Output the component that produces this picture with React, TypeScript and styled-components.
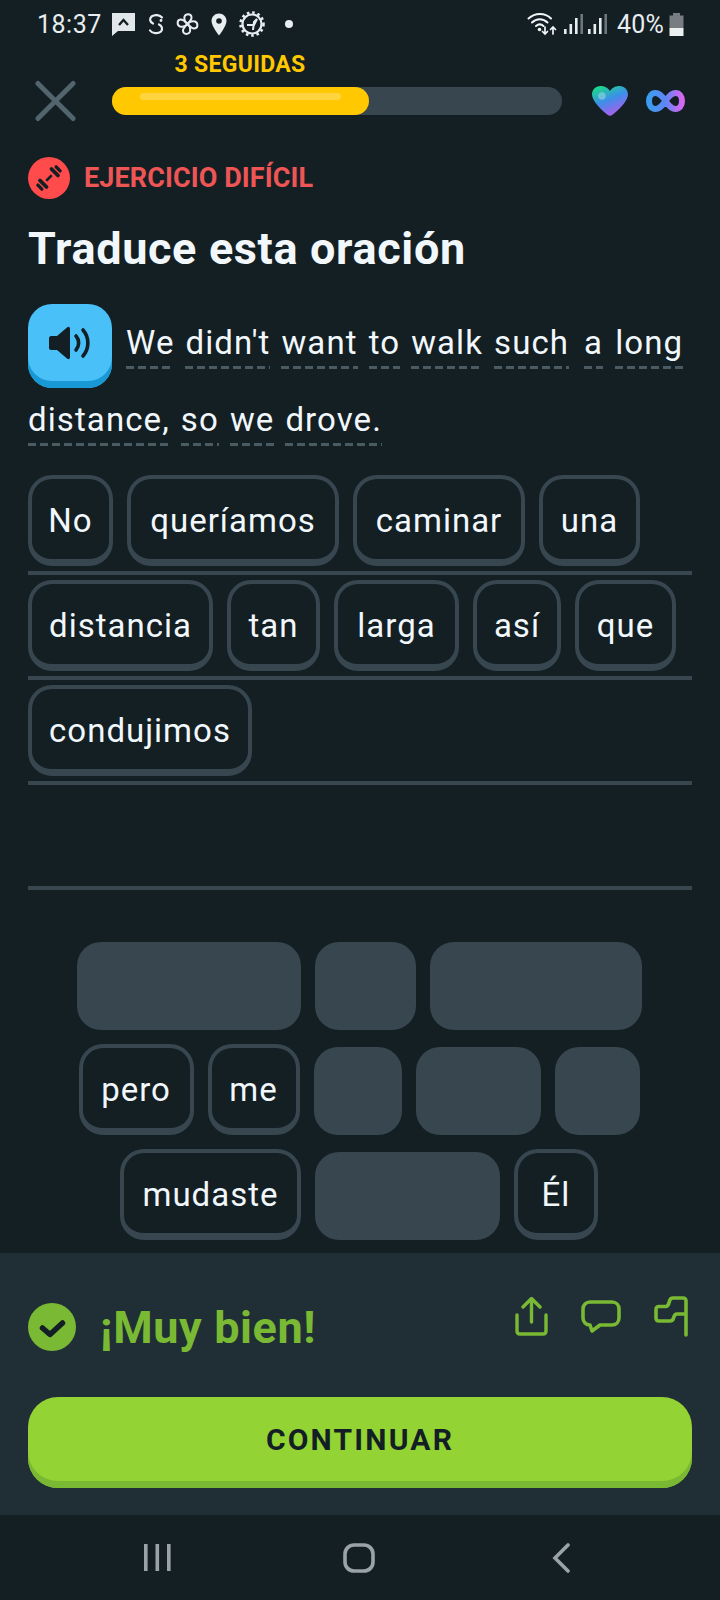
import React from "react";
import styled, { createGlobalStyle } from "styled-components";

const Global = createGlobalStyle`
  html, body { margin: 0; padding: 0; background: #141f24; }
  * { box-sizing: border-box; }
`;

const FONT = `Roboto, "Noto Sans", "Liberation Sans", sans-serif`;

const Page = styled.div`
  width: 720px;
  height: 1600px;
  background: #141f24;
  display: flex;
  flex-direction: column;
  font-family: ${FONT};
  color: #f1f7fb;
  overflow: hidden;
`;

const StatusBar = styled.div`
  height: 48px;
  flex: none;
  display: flex;
  align-items: center;
  padding: 0 36px 0 37px;
  color: #e8edf0;
`;
const StatusTime = styled.span`
  font-size: 25px;
  width: 74px;
  letter-spacing: 0.5px;
`;
const StatusLeft = styled.div`
  display: flex;
  align-items: center;
  gap: 12px;
  flex: 1;
`;
const StatusDot = styled.span`
  width: 8px;
  height: 8px;
  margin-left: 8px;
  border-radius: 50%;
  background: #e8edf0;
`;
const StatusRight = styled.div`
  display: flex;
  align-items: center;
  gap: 5px;
`;
const StatusPct = styled.span`
  font-size: 25px;
  margin-left: 5px;
  letter-spacing: 0.2px;
`;

const StreakLabel = styled.div`
  height: 32px;
  flex: none;
  width: 256px;
  margin-left: 112px;
  text-align: center;
  line-height: 34px;
  font-size: 23px;
  font-weight: 700;
  color: #ffc800;
  letter-spacing: 0.3px;
`;
const HeaderRow = styled.div`
  height: 42px;
  flex: none;
  display: flex;
  align-items: center;
  padding: 0 35px 0 35px;
`;
const Track = styled.div`
  width: 450px;
  height: 28px;
  margin-left: 36px;
  border-radius: 14px;
  background: #37464f;
  flex: none;
`;
const Fill = styled.div<{ $pct: number }>`
  width: ${(p) => p.$pct}%;
  height: 100%;
  border-radius: 14px;
  background: #ffc800;
  padding: 6px 28px 0 28px;
`;
const Shine = styled.div`
  height: 7px;
  border-radius: 4px;
  background: #ffd53f;
`;
const HeaderIcons = styled.div`
  display: flex;
  align-items: center;
  margin-left: 30px;
  gap: 18px;
`;

const Main = styled.div`
  padding: 0 28px;
  flex: none;
`;
const HardRow = styled.div`
  margin-top: 35px;
  height: 42px;
  display: flex;
  align-items: center;
  gap: 14px;
`;
const HardLabel = styled.span`
  font-size: 27px;
  font-weight: 700;
  color: #ee5555;
  letter-spacing: 0.1px;
`;
const Title = styled.h1`
  margin: 20px 0 0;
  height: 59px;
  line-height: 60px;
  font-size: 45px;
  font-weight: 700;
  color: #f1f7fb;
  letter-spacing: 0.65px;
`;
const PromptFirst = styled.div`
  margin-top: 26px;
  height: 84px;
  display: flex;
  gap: 14px;
`;
const SpeakerButton = styled.div`
  width: 84px;
  height: 84px;
  flex: none;
  border-radius: 24px;
  background: #49c0f8;
  box-shadow: inset 0 -7px 0 #1899d6;
  display: flex;
  align-items: center;
  justify-content: center;
  padding-bottom: 7px;
`;
const Words = styled.div<{ $top: number }>`
  display: flex;
  gap: 11px;
  padding-top: ${(p) => p.$top}px;
  height: 64px;
`;
const Word = styled.span<{ $lead?: number }>`
  font-size: 33px;
  line-height: 44px;
  height: 48px;
  letter-spacing: 1.1px;
  margin-left: ${(p) => p.$lead ?? 0}px;
  color: #f1f7fb;
  background-image: repeating-linear-gradient(90deg, #4b5b63 0 8px, transparent 8px 12px);
  background-size: 100% 3px;
  background-repeat: no-repeat;
  background-position: 0 100%;
`;

const AnswerRow = styled.div`
  height: 105px;
  padding-top: 5px;
  border-bottom: 4px solid #37464f;
  display: flex;
  gap: 14px;
`;
const Chip = styled.div<{ $w: number }>`
  width: ${(p) => p.$w}px;
  height: 91px;
  flex: none;
  border: 4px solid #37464f;
  border-bottom-width: 7px;
  border-radius: 24px;
  background: #141f24;
  display: flex;
  align-items: center;
  justify-content: center;
  font-size: 33px;
  letter-spacing: 1px;
  color: #f1f7fb;
  padding-top: 2px;
`;
const Blank = styled.div<{ $w: number }>`
  width: ${(p) => p.$w}px;
  height: 88px;
  margin-top: 3px;
  flex: none;
  border-radius: 24px;
  background: #37464f;
`;
const AnswerArea = styled.div`
  margin-top: 18px;
`;
const Bank = styled.div`
  margin-top: 49px;
  margin-left: -2px;
  display: flex;
  flex-direction: column;
  gap: 14px;
  flex: none;
`;
const BankRow = styled.div`
  display: flex;
  justify-content: center;
  gap: 14px;
`;
const Spacer = styled.div`
  flex: 1;
`;

const Footer = styled.div`
  height: 262px;
  flex: none;
  background: #202f36;
  padding: 0 28px;
  display: flex;
  flex-direction: column;
`;
const ResultRow = styled.div`
  height: 144px;
  flex: none;
  display: flex;
  align-items: flex-start;
`;
const ResultLeft = styled.div`
  display: flex;
  align-items: center;
  gap: 24px;
  margin-top: 48px;
  flex: 1;
`;
const ResultText = styled.span`
  font-size: 45px;
  font-weight: 700;
  color: #79b933;
  line-height: 48px;
  letter-spacing: 0.6px;
  padding-top: 3px;
`;
const ResultIcons = styled.div`
  display: flex;
  align-items: center;
  gap: 33px;
  margin-top: 43px;
  margin-right: 3px;
`;
const ContinueButton = styled.div`
  height: 91px;
  border-radius: 30px;
  background: #93d333;
  box-shadow: inset 0 -7px 0 #79b933;
  display: flex;
  align-items: center;
  justify-content: center;
  padding-bottom: 7px;
  font-size: 30px;
  font-weight: 700;
  letter-spacing: 2.2px;
  color: #131f24;
`;

const NavBar = styled.div`
  height: 85px;
  flex: none;
  background: #141f24;
  display: flex;
  align-items: center;
  justify-content: center;
  padding-right: 3px;
`;
const NavSlot = styled.div`
  width: 202px;
  display: flex;
  justify-content: center;
`;

const Bell = () => (
  <svg width="25" height="24" viewBox="0 0 25 24">
    <path d="M1 1h23v18H7l-6 5z" fill="#e2e7ea" />
    <path d="M8 13l4.500-5 4.500 5" fill="none" stroke="#141f24" strokeWidth="2.400" />
  </svg>
);
const SyncS = () => (
  <svg width="16" height="22" viewBox="0 0 16 22" fill="none" stroke="#e8edf0" strokeWidth="2.200" strokeLinecap="round">
    <path d="M14 4.500C12 2 7 1 3.500 3.500 1 6 2 9 5 10.500" />
    <path d="M2 17.500C4 20.500 10 21 13 18.500c2-2.500 1-5.500-2-7" />
    <circle cx="13" cy="7.500" r="1.400" fill="#e8edf0" stroke="none" />
  </svg>
);
const Fan = () => (
  <svg width="23" height="24" viewBox="0 0 23 24" fill="none" stroke="#e8edf0" strokeWidth="2">
    <path d="M11.500 12C9 10 8 7 8.500 4.500 9.500 1.500 15 1 15.500 5c.3 3-2 5-4 7z" />
    <path d="M11.500 12c2-2.500 5-3 7.500-2.500 3 1 3.500 6.500-.5 7-3 .3-5-2.500-7-4.500z" />
    <path d="M11.500 12c2.500 2 3 5 2.500 7.500-1 3-6.500 3.500-7-.5-.3-3 2.500-5 4.500-7z" />
    <path d="M11.500 12C9.500 14.500 6.500 15 4 14.500 1 13.500.5 8 4.500 7.500c3-.3 5 2.500 7 4.500z" />
  </svg>
);
const Pin = () => (
  <svg width="16" height="23" viewBox="0 0 16 23">
    <path d="M8 .5C3.800.5.500 3.800.500 8c0 5 7.500 14.500 7.500 14.500S15.500 13 15.500 8C15.500 3.800 12.200.5 8 .5z" fill="#e8edf0" />
    <circle cx="8" cy="8" r="2.800" fill="#141f24" />
  </svg>
);
const Gear = () => (
  <svg width="26" height="26" viewBox="0 0 26 26" fill="none" stroke="#e8edf0">
    <circle cx="13" cy="13" r="9.500" strokeWidth="2.200" />
    <circle cx="13" cy="13" r="11.500" strokeWidth="2.600" strokeDasharray="2.600 2.800" />
    <path d="M8 14h7l3-6-3 3-1 8" strokeWidth="2" />
  </svg>
);
const Wifi = () => (
  <svg width="34" height="24" viewBox="0 0 30 24" fill="none" stroke="#f1f5f6" strokeLinecap="round">
    <path d="M1.500 6.500C8 .5 18 .5 24 6.500" strokeWidth="2" />
    <path d="M5 10.500C9.500 6 16 6 20.500 10.500" strokeWidth="2" />
    <path d="M9 14c2.500-2.200 5-2.200 7.500 0" strokeWidth="2" />
    <circle cx="12.500" cy="17.500" r="1.800" fill="#f1f5f6" stroke="none" />
    <path d="M18 15v7m-2.500-2.500L18 22l2.500-2.500M26 22v-7m-2.500 2.500L26 15l2.500 2.500" strokeWidth="1.700" />
  </svg>
);
const Signal = () => (
  <svg width="19" height="22" viewBox="0 0 19 22" fill="#e8edf0">
    <rect x="0" y="16" width="2.600" height="5" />
    <rect x="5.500" y="11" width="2.600" height="10" />
    <rect x="11" y="5" width="2.600" height="16" />
    <rect x="16.400" y="1" width="2.600" height="20" fill="#6d767b" />
  </svg>
);
const Battery = () => (
  <svg width="15" height="23" viewBox="0 0 15 23">
    <rect x="4" y="0" width="7" height="3" fill="#777d80" />
    <rect x="0.500" y="2.500" width="14" height="13" fill="#777d80" />
    <rect x="0.500" y="15" width="14" height="8" fill="#eceff0" />
  </svg>
);
const CloseX = () => (
  <svg width="42" height="42" viewBox="0 0 42 42" fill="none" stroke="#52656d" strokeWidth="5" strokeLinecap="round">
    <path d="M3 3l36 36M39 3L3 39" />
  </svg>
);
const Heart = () => (
  <svg width="36" height="30" viewBox="0 0 36 30">
    <defs>
      <linearGradient id="hg" x1="0.100" y1="0" x2="0.600" y2="1">
        <stop offset="0" stopColor="#17e37f" />
        <stop offset="0.500" stopColor="#3c8fe8" />
        <stop offset="1" stopColor="#b05cf0" />
      </linearGradient>
    </defs>
    <path d="M18 5C15.500 1 11.500 0 8.500 0 3.500 0 0 3.800 0 8.500 0 15 10 24.500 15.500 28.800c1.500 1.200 3.500 1.200 5 0C26 24.500 36 15 36 8.500 36 3.800 32.500 0 27.500 0 24.500 0 20.500 1 18 5z" fill="url(#hg)" />
    <circle cx="10" cy="10" r="3.800" fill="#ffffff" opacity="0.300" />
  </svg>
);
const Infinity8 = () => (
  <svg width="39" height="22" viewBox="0 0 39 22" fill="none">
    <defs>
      <linearGradient id="ig" x1="0" y1="0" x2="1" y2="0">
        <stop offset="0" stopColor="#3b9cf0" />
        <stop offset="0.500" stopColor="#5f86f5" />
        <stop offset="1" stopColor="#d667f2" />
      </linearGradient>
    </defs>
    <path
      d="M19.500 11C16.500 6.500 13.500 3 9.500 3 5.500 3 3 6.500 3 11s2.500 8 6.500 8c4 0 7-3.500 10-8zm0 0c3-4.500 6-8 10-8 4 0 6.500 3.500 6.500 8s-2.500 8-6.500 8c-4 0-7-3.500-10-8z"
      stroke="url(#ig)"
      strokeWidth="6"
    />
  </svg>
);
const Dumbbell = () => (
  <svg width="42" height="42" viewBox="0 0 42 42">
    <circle cx="21" cy="21" r="21" fill="#ff4b4b" />
    <g transform="rotate(-45 21 21)" fill="#141f24">
      <rect x="17" y="19.600" width="8" height="2.800" rx="1" />
      <rect x="11" y="14.500" width="3.800" height="13" rx="1.900" />
      <rect x="6.400" y="16.500" width="3.400" height="9" rx="1.700" />
      <rect x="27.200" y="14.500" width="3.800" height="13" rx="1.900" />
      <rect x="32.200" y="16.500" width="3.400" height="9" rx="1.700" />
    </g>
  </svg>
);
const Speaker = () => (
  <svg width="42" height="34" viewBox="0 0 42 34">
    <path d="M2 10h6L18 1.500c1.500-1.300 3-.5 3 1.500v28c0 2-1.500 2.800-3 1.500L8 24H2c-1 0-2-1-2-2V12c0-1 1-2 2-2z" fill="#131f24" />
    <path d="M27 10c3.500 4 3.500 10 0 14M34 4c6.500 7.500 6.500 18.500 0 26" fill="none" stroke="#131f24" strokeWidth="3.600" strokeLinecap="round" />
  </svg>
);
const CheckCircle = () => (
  <svg width="48" height="48" viewBox="0 0 48 48">
    <circle cx="24" cy="24" r="24" fill="#79b933" />
    <path d="M14.500 25l7.500 6.500 12.500-11.500" fill="none" stroke="#131f24" strokeWidth="5.500" strokeLinecap="round" strokeLinejoin="round" />
  </svg>
);
const ShareIcon = () => (
  <svg width="33" height="39" viewBox="0 0 33 39" fill="none" stroke="#79b933" strokeWidth="3.400" strokeLinecap="round" strokeLinejoin="round">
    <path d="M2 18v16c0 2 1 3 3 3h23c2 0 3-1 3-3V18" />
    <path d="M16.500 25V2M8 10l8.500-8.500L25 10" />
  </svg>
);
const ChatIcon = () => (
  <svg width="40" height="34" viewBox="0 0 40 34" fill="none" stroke="#79b933" strokeWidth="3.600" strokeLinecap="round" strokeLinejoin="round">
    <path d="M9 2h22c4 0 7 3 7 7v9c0 4-3 7-7 7H19l-8 6-2-6c-4 0-7-3-7-7V9c0-4 3-7 7-7z" />
  </svg>
);
const FlagIcon = () => (
  <svg width="35" height="41" viewBox="0 0 35 41" fill="none" stroke="#79b933" strokeWidth="3.600" strokeLinecap="round" strokeLinejoin="round">
    <path d="M32 39V5c0-2-1-3-3-3H19c-2 0-3 1-3.500 3-.5 2-1 5-3.500 5.500H5c-2 0-3 1-3 3v8.500c0 2 1 3 3 3h11c2 0 3-1 3.500-3 .5-2 1.500-4 3.500-4h9" />
  </svg>
);
const NavRecent = () => (
  <svg width="28" height="29" viewBox="0 0 28 29" fill="#9aa3a8">
    <rect x="1" y="1" width="3.600" height="27" />
    <rect x="12.500" y="1" width="3.600" height="27" />
    <rect x="24" y="1" width="3.600" height="27" />
  </svg>
);
const NavHome = () => (
  <svg width="32" height="30" viewBox="0 0 32 30" fill="none" stroke="#9aa3a8" strokeWidth="3.600">
    <rect x="2" y="2" width="28" height="26" rx="9" />
  </svg>
);
const NavBack = () => (
  <svg width="18" height="30" viewBox="0 0 18 30" fill="none" stroke="#9aa3a8" strokeWidth="3.600" strokeLinecap="round">
    <path d="M16 2L3 15l13 13" />
  </svg>
);

const answers: [string, number][][] = [
  [["No", 85], ["queríamos", 212], ["caminar", 172], ["una", 101]],
  [["distancia", 185], ["tan", 93], ["larga", 125], ["así", 88], ["que", 101]],
  [["condujimos", 224]],
  [],
];

const firstLine: [string, number][] = [
  ["We", 0], ["didn't", 0], ["want", 0], ["to", 0], ["walk", 0], ["such", 0], ["a", 4], ["long", 1],
];

export default function App() {
  return (
    <Page>
      <Global />
      <StatusBar>
        <StatusTime>18:37</StatusTime>
        <StatusLeft>
          <Bell />
          <SyncS />
          <Fan />
          <Pin />
          <Gear />
          <StatusDot />
        </StatusLeft>
        <StatusRight>
          <Wifi />
          <Signal />
          <Signal />
          <StatusPct>40%</StatusPct>
          <Battery />
        </StatusRight>
      </StatusBar>
      <StreakLabel>3 SEGUIDAS</StreakLabel>
      <HeaderRow>
        <CloseX />
        <Track>
          <Fill $pct={57}>
            <Shine />
          </Fill>
        </Track>
        <HeaderIcons>
          <Heart />
          <Infinity8 />
        </HeaderIcons>
      </HeaderRow>
      <Main>
        <HardRow>
          <Dumbbell />
          <HardLabel>EJERCICIO DIFÍCIL</HardLabel>
        </HardRow>
        <Title>Traduce esta oración</Title>
        <PromptFirst>
          <SpeakerButton>
            <Speaker />
          </SpeakerButton>
          <Words $top={17}>
            {firstLine.map(([w, lead]) => (
              <Word key={w} $lead={lead}>{w}</Word>
            ))}
          </Words>
        </PromptFirst>
        <Words $top={10}>
          {["distance,", "so", "we", "drove."].map((w) => (
            <Word key={w}>{w}</Word>
          ))}
        </Words>
        <AnswerArea>
          {answers.map((row, i) => (
            <AnswerRow key={i}>
              {row.map(([t, w]) => (
                <Chip key={t} $w={w}>{t}</Chip>
              ))}
            </AnswerRow>
          ))}
        </AnswerArea>
      </Main>
      <Bank>
        <BankRow>
          <Blank $w={224} />
          <Blank $w={101} />
          <Blank $w={212} />
        </BankRow>
        <BankRow>
          <Chip $w={115}>pero</Chip>
          <Chip $w={92}>me</Chip>
          <Blank $w={88} />
          <Blank $w={125} />
          <Blank $w={85} />
        </BankRow>
        <BankRow>
          <Chip $w={181}>mudaste</Chip>
          <Blank $w={185} />
          <Chip $w={84}>Él</Chip>
        </BankRow>
      </Bank>
      <Spacer />
      <Footer>
        <ResultRow>
          <ResultLeft>
            <CheckCircle />
            <ResultText>¡Muy bien!</ResultText>
          </ResultLeft>
          <ResultIcons>
            <ShareIcon />
            <ChatIcon />
            <FlagIcon />
          </ResultIcons>
        </ResultRow>
        <ContinueButton>CONTINUAR</ContinueButton>
      </Footer>
      <NavBar>
        <NavSlot><NavRecent /></NavSlot>
        <NavSlot><NavHome /></NavSlot>
        <NavSlot><NavBack /></NavSlot>
      </NavBar>
    </Page>
  );
}
